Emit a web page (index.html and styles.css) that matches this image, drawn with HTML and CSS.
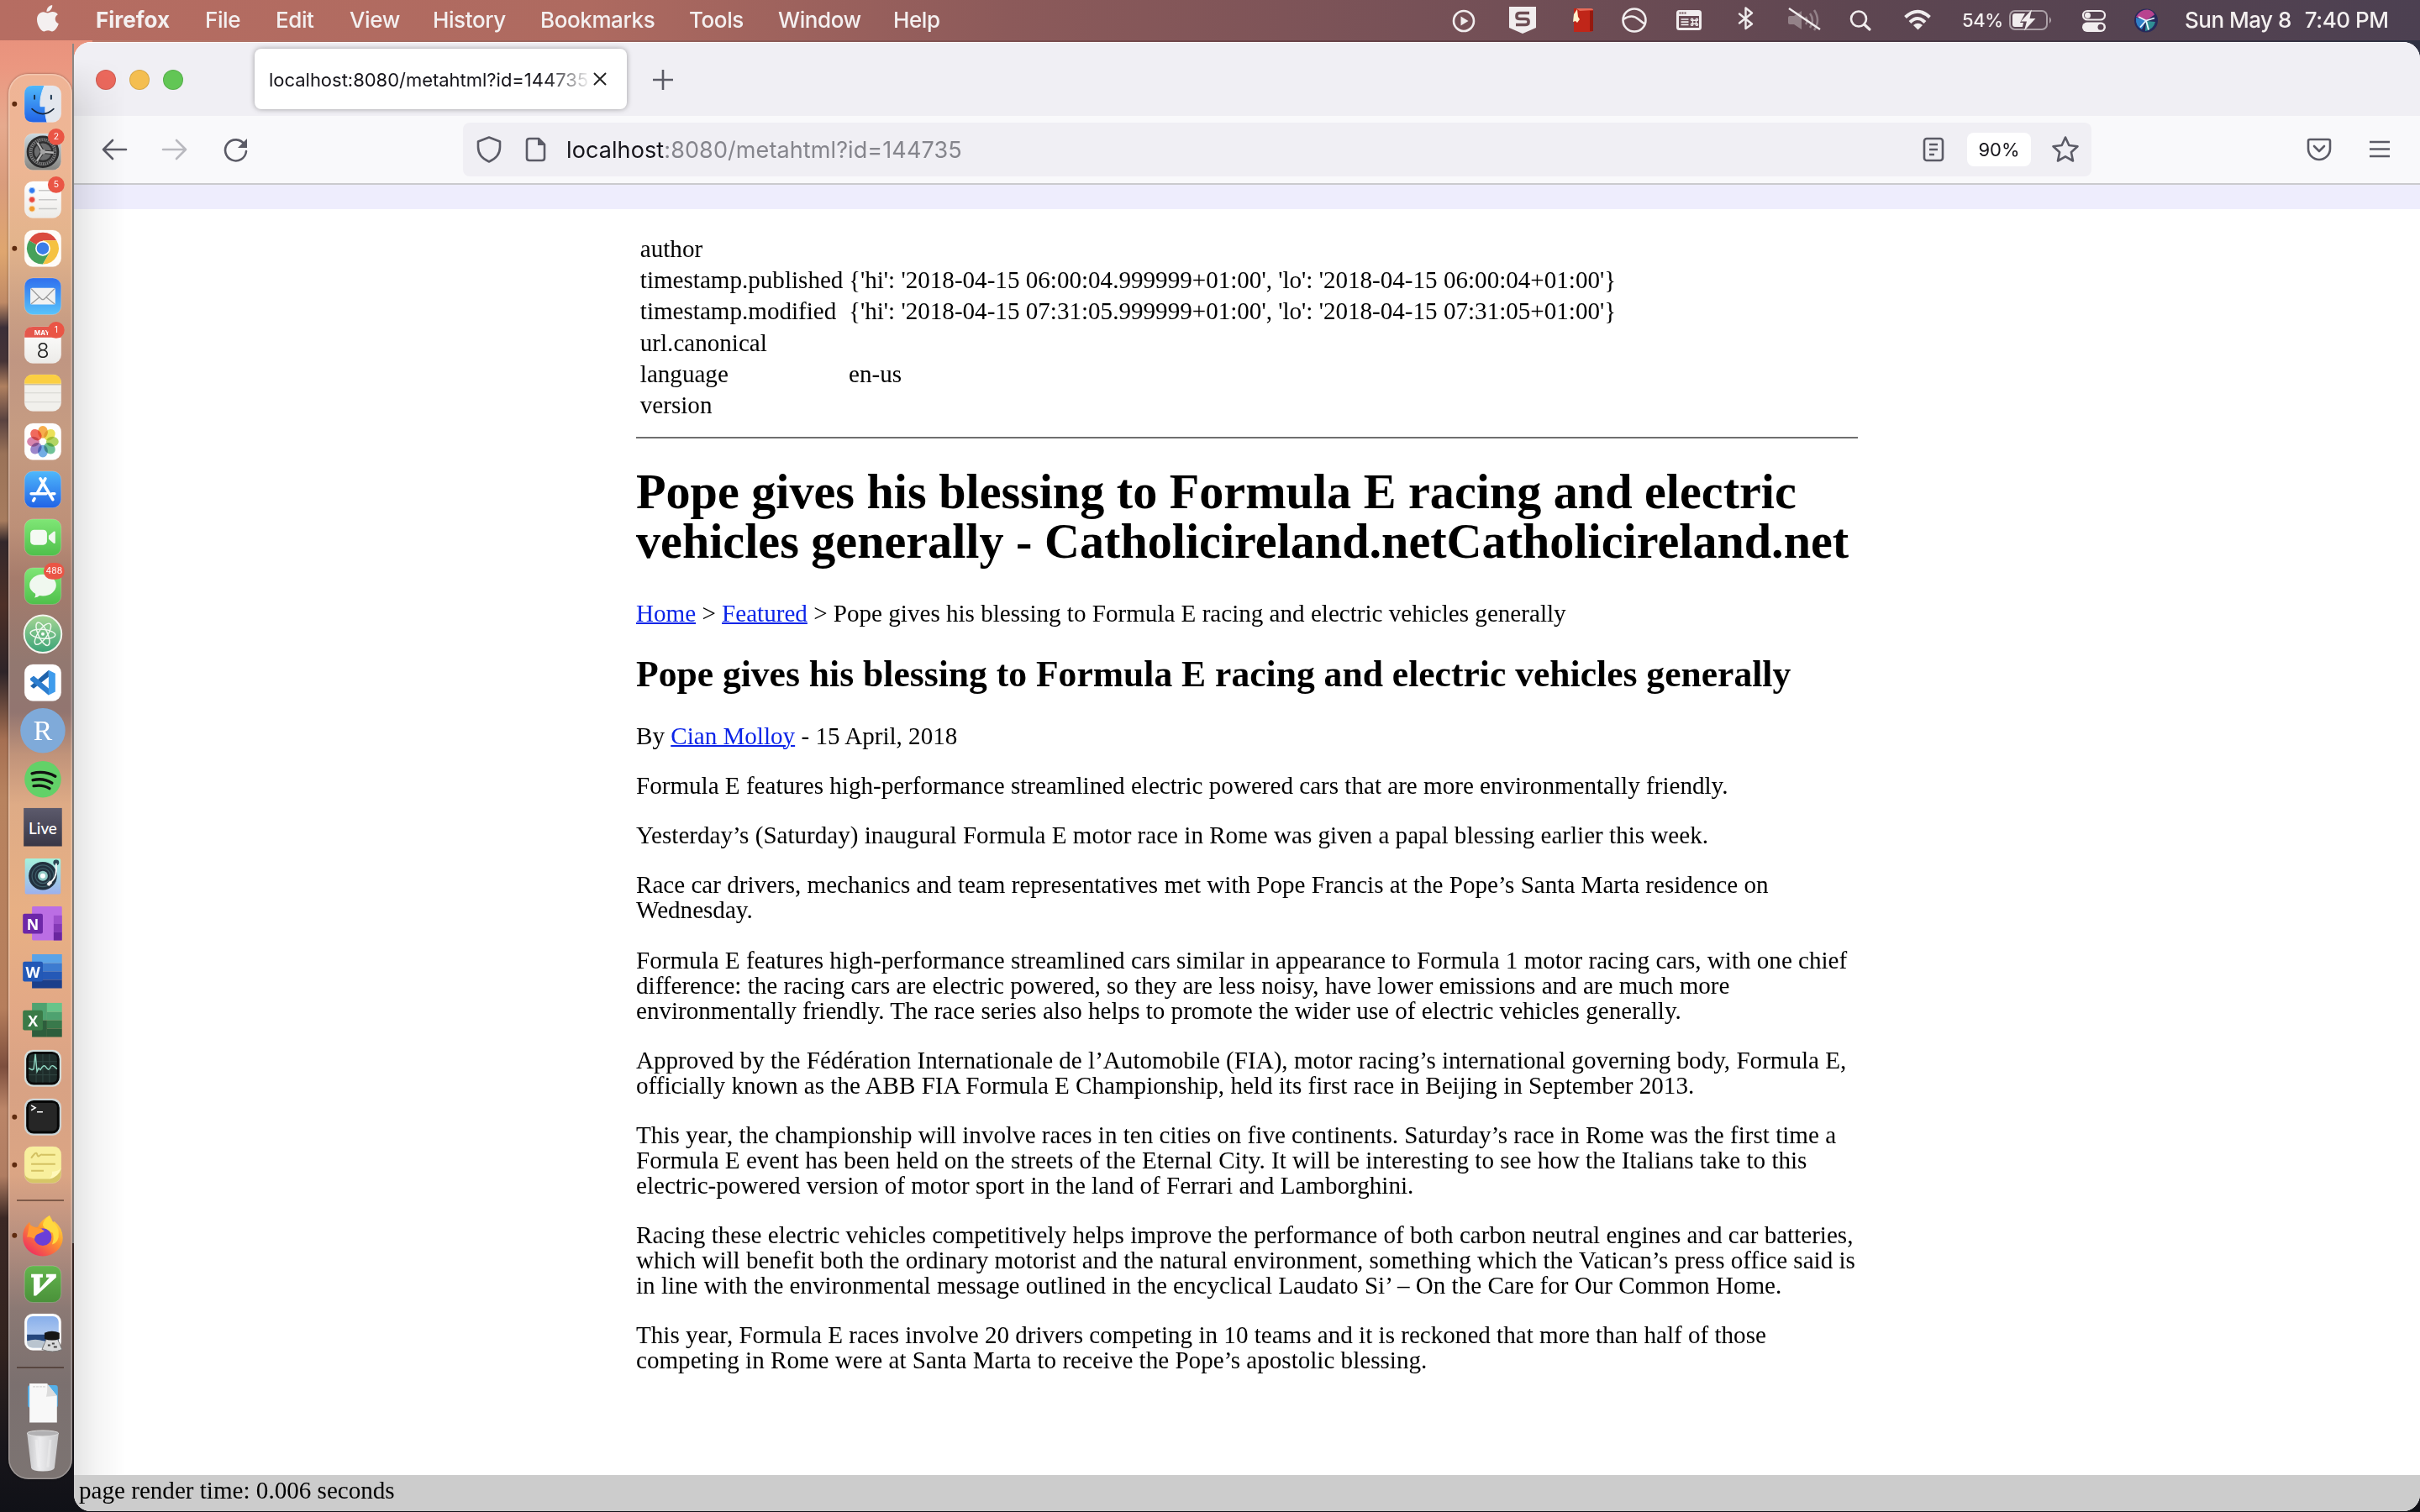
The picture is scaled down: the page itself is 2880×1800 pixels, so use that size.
FILE: index.html
```html
<!DOCTYPE html>
<html lang="en">
<head>
<meta charset="utf-8">
<title>localhost:8080/metahtml?id=144735</title>
<link rel="stylesheet" href="styles.css">
</head>
<body>
<div class="desktop">
  <header class="menubar">
    <svg class="apple" viewBox="0 0 26 32"><path d="M18.2 0c.3 2.300-.7 4.300-2 5.700-1.300 1.500-3 2.300-4.700 2.200C11.200 5.700 12.300 3.700 13.500 2.400 14.800 1 16.700.1 18.200 0zM24.900 11.300c-2 1.200-3.200 3-3.200 5.300 0 2.600 1.600 4.800 4.100 5.700-.6 1.900-1.500 3.600-2.600 5.200-1.600 2.300-3.100 3.900-5.100 3.900-1.900 0-2.600-1.100-4.900-1.100s-3.200 1.100-5 1.100c-2 0-3.700-2-5.100-4.100C1.100 24.300 0 20.500 0 17.300 0 11.700 3.500 8.200 7.500 8.200c2.100 0 3.900 1.300 5.200 1.300 1.200 0 3.300-1.400 5.900-1.400 2.500 0 4.800 1.100 6.300 3.200z"/></svg>
    <nav class="menus">
      <span class="m m-app">Firefox</span><span class="m m-file">File</span><span class="m m-edit">Edit</span><span class="m m-view">View</span><span class="m m-hist">History</span><span class="m m-book">Bookmarks</span><span class="m m-tool">Tools</span><span class="m m-wind">Window</span><span class="m m-help">Help</span>
    </nav>
    <svg class="status" viewBox="1720 0 600 48">
      <g fill="none" stroke="#f1edee" stroke-width="2.600">
        <circle cx="1742" cy="25" r="12"/>
        <circle cx="1945" cy="24" r="13.500"/><path d="M1932 23q10-7 18 0 5 4 8 6"/>
      </g>
      <path d="M1738.500 19.500v11l9-5.500z" fill="#f1edee"/>
      <path d="M1796 8h32v25l-16 7-16-7z" fill="#f1edee"/>
      <path d="M1820 15.500h-11q-4 0-4 3v1.500q0 2.500 4 2.500h6q4 0 4 2.500v1.500q0 3-4 3h-11" fill="none" stroke="#6d4d53" stroke-width="3.600"/>
      <path d="M1873 10l20 0q3 0 3 3v22q0 3-4 3h-19z" fill="#c02619"/><path d="M1876 10h17q3 0 3 2l-16 1z" fill="#e86a58"/><path d="M1892 13h4v24h-4z" fill="#96190f"/><path d="M1872 26l1-9 4-6 1 9 2 3-3 4-2-2z" fill="#fff2cc"/>
      <rect x="1996.500" y="13.500" width="27" height="21" rx="2" fill="none" stroke="#f1edee" stroke-width="3"/><path d="M1996 13h28v6h-28z" fill="#f1edee"/><path d="M2000.500 23h9M2000.500 26.200h9M2000.500 29.400h9" stroke="#f1edee" stroke-width="1.700"/><g fill="none" stroke="#f1edee" stroke-width="1.400"><path d="M2014.500 24.300h4v4h-4z"/><circle cx="2013.600" cy="23.300" r="1.200"/><circle cx="2019.400" cy="23.300" r="1.200"/><circle cx="2013.600" cy="29.200" r="1.200"/><circle cx="2019.400" cy="29.200" r="1.200"/></g><path d="M1998.500 15.500h2m1 0h2m1 0h2" stroke="#6d4d53" stroke-width="1.800"/>
      <path d="M2070 16.500l15 12-7.500 5.500V9.500l7.500 6-15 12" fill="none" stroke="#f1edee" stroke-width="2.400" stroke-linejoin="round" stroke-linecap="round"/>
      <g opacity=".35"><path d="M2128 21q0-2 2-2h5l9-6v22l-9-6h-5q-2 0-2-2z" fill="#f1edee"/><path d="M2149 20q3 5 0 9M2154 16q6 8 0 17M2159 12q8 12 0 24" fill="none" stroke="#f1edee" stroke-width="2.500"/></g>
      <path d="M2129 10l37 25" stroke="#f1edee" stroke-width="2.400"/>
      <circle cx="2212" cy="22.500" r="9" fill="none" stroke="#f1edee" stroke-width="2.600"/><path d="M2218.500 29l6.500 6" stroke="#f1edee" stroke-width="3.200" stroke-linecap="round"/>
      <path d="M2267.500 20.500q14.500-13.500 29 0M2273 26.500q9-9 18 0" fill="none" stroke="#f1edee" stroke-width="4"/><path d="M2277 30q5.500-4.500 11 0l-5.500 5.500z" fill="#f1edee"/>
    </svg>
    <span class="battery">54%</span>
    <svg class="power" viewBox="2388 0 190 48">
      <rect x="2392" y="13" width="44" height="22" rx="6" fill="none" stroke="#f1edee" stroke-width="2" opacity=".55"/><path d="M2398 16h12l-6 11h4l-1 5h-9q-3 0-3-3V19q0-3 3-3z" fill="#f1edee"/><path d="M2418 11.500l-13 14h7l-3 11 13.500-14.500h-7z" fill="#f1edee"/><path d="M2439 20q4 4 0 8z" fill="#f1edee" opacity=".6"/>
      <rect x="2479" y="13" width="26" height="10.500" rx="5.200" fill="none" stroke="#f1edee" stroke-width="2.200"/><circle cx="2484.500" cy="18.200" r="3.500" fill="#f1edee"/><rect x="2478" y="26.500" width="28" height="11.500" rx="5.700" fill="#f1edee"/><circle cx="2500" cy="32.200" r="3.500" fill="#5a4553"/>
      <circle cx="2554" cy="24.500" r="14" fill="#262a5c"/><path d="M2542 20q5-9 14-8.500 6 1 8 6l-10 7z" fill="#b8438f"/><path d="M2542 21l12 3-5 11q-8-4-7-14z" fill="#2f7fc8"/><path d="M2554 25l11 1q-2 9-12 11z" fill="#2f8f94"/><path d="M2545 20l9 4.500 10-3M2554 24.500l-7 8M2554 24.500l3 11" stroke="#eaf8ff" stroke-width="1.800" fill="none"/>
    </svg>
    <time class="clock"><span>Sun May 8</span><span>7:40 PM</span></time>
  </header>

  <section class="window">
    <div class="tabstrip">
      <div class="lights"><i class="light red"></i><i class="light amber"></i><i class="light green"></i></div>
      <div class="tab"><span class="tab-title">localhost:8080/metahtml?id=144735</span><svg class="tab-close" viewBox="0 0 16 16"><path d="M1 1l14 14M15 1L1 15"/></svg></div>
      <svg class="newtab" viewBox="0 0 24 24"><path d="M12 0v24M0 12h24"/></svg>
    </div>
    <div class="toolbar">
      <svg class="navicons" viewBox="0 0 190 40">
        <g fill="none" stroke="#5b5b66" stroke-width="2.600" stroke-linecap="round" stroke-linejoin="round">
          <path d="M15 20h27M26 9L15 20l11 11"/>
          <path d="M86 20h27M102 9l11 11-11 11" opacity=".4"/>
          <path d="M183 14a12.500 12.500 0 1 0 2 8"/>
        </g><path d="M186 7v11h-11z" fill="#5b5b66"/>
      </svg>
      <div class="urlbar">
        <svg class="siteicons" viewBox="0 0 90 40"><g fill="none" stroke="#5b5b66" stroke-width="2.600" stroke-linejoin="round"><path d="M31 5.500l13 5v6.500c0 8-5 14-13 17.500-8-3.500-13-9.500-13-17.500v-6.500z"/><path d="M79 7h11l7 7v16q0 3-3 3H79q-3 0-3-3V10q0-3 3-3z"/></g><path d="M89 6l9 9h-9z" fill="#5b5b66"/></svg>
        <span class="url"><b>localhost</b>:8080/metahtml?id=144735</span>
        <svg class="reader" viewBox="0 0 26 30"><rect x="2" y="2" width="22" height="26" rx="3"/><path d="M8 9h10M8 15h10M8 21h6"/></svg>
        <span class="zoom">90%</span>
        <svg class="star" viewBox="0 0 34 34"><path d="M17 2.500l4.300 9.500 10.200 1.200-7.600 7 2.100 10.300-9-5.200-9 5.200 2.100-10.300-7.600-7L12.700 12z"/></svg>
      </div>
      <svg class="pocket" viewBox="0 0 30 28"><path d="M4 2h22q2 0 2 2v9a13 13 0 0 1-26 0V4q0-2 2-2zM9 10l6 6 6-6"/></svg>
      <svg class="burger" viewBox="0 0 24 22"><path d="M0 2h24M0 10.500h24M0 19h24"/></svg>
    </div>
    <main class="page">
      <div class="band"></div>
      <article class="article">
        <table class="meta">
          <tr><td>author</td><td></td></tr>
          <tr><td>timestamp.published</td><td>{'hi': '2018-04-15 06:00:04.999999+01:00', 'lo': '2018-04-15 06:00:04+01:00'}</td></tr>
          <tr><td>timestamp.modified</td><td>{'hi': '2018-04-15 07:31:05.999999+01:00', 'lo': '2018-04-15 07:31:05+01:00'}</td></tr>
          <tr><td>url.canonical</td><td></td></tr>
          <tr><td>language</td><td>en-us</td></tr>
          <tr><td>version</td><td></td></tr>
        </table>
        <hr>
        <h1>Pope gives his blessing to Formula E racing and electric<br>vehicles generally - Catholicireland.netCatholicireland.net</h1>
        <p class="crumbs"><a>Home</a> &gt; <a>Featured</a> &gt; Pope gives his blessing to Formula E racing and electric vehicles generally</p>
        <h2>Pope gives his blessing to Formula E racing and electric vehicles generally</h2>
        <p>By <a>Cian Molloy</a> - 15 April, 2018</p>
        <p>Formula E features high-performance streamlined electric powered cars that are more environmentally friendly.</p>
        <p>Yesterday’s (Saturday) inaugural Formula E motor race in Rome was given a papal blessing earlier this week.</p>
        <p>Race car drivers, mechanics and team representatives met with Pope Francis at the Pope’s Santa Marta residence on<br>Wednesday.</p>
        <p>Formula E features high-performance streamlined cars similar in appearance to Formula 1 motor racing cars, with one chief<br>difference: the racing cars are electric powered, so they are less noisy, have lower emissions and are much more<br>environmentally friendly. The race series also helps to promote the wider use of electric vehicles generally.</p>
        <p>Approved by the Fédération Internationale de l’Automobile (FIA), motor racing’s international governing body, Formula E,<br>officially known as the ABB FIA Formula E Championship, held its first race in Beijing in September 2013.</p>
        <p>This year, the championship will involve races in ten cities on five continents. Saturday’s race in Rome was the first time a<br>Formula E event has been held on the streets of the Eternal City. It will be interesting to see how the Italians take to this<br>electric-powered version of motor sport in the land of Ferrari and Lamborghini.</p>
        <p>Racing these electric vehicles competitively helps improve the performance of both carbon neutral engines and car batteries,<br>which will benefit both the ordinary motorist and the natural environment, something which the Vatican’s press office said is<br>in line with the environmental message outlined in the encyclical Laudato Si’ – On the Care for Our Common Home.</p>
        <p>This year, Formula E races involve 20 drivers competing in 10 teams and it is reckoned that more than half of those<br>competing in Rome were at Santa Marta to receive the Pope’s apostolic blessing.</p>
      </article>
      <footer class="timing">page render time: 0.006 seconds</footer>
    </main>
  </section>
  <div class="dock-shade"></div>

  <aside class="dock">
    <svg width="0" height="0" class="defs"><defs>
      <linearGradient id="blue" x2="0" y2="1"><stop stop-color="#4fb8fb"/><stop offset="1" stop-color="#2163e6"/></linearGradient>
      <linearGradient id="mail" x2="0" y2="1"><stop stop-color="#2f6fee"/><stop offset="1" stop-color="#58c3fa"/></linearGradient>
      <linearGradient id="green" x2="0" y2="1"><stop stop-color="#7fe676"/><stop offset="1" stop-color="#4fc04b"/></linearGradient>
      <linearGradient id="white" x2="0" y2="1"><stop stop-color="#fff"/><stop offset="1" stop-color="#ecebe8"/></linearGradient>
      <linearGradient id="steel" x2="0" y2="1"><stop stop-color="#ccd9df"/><stop offset="1" stop-color="#84837f"/></linearGradient>
      <linearGradient id="atom" x2="0" y2="1"><stop stop-color="#a6d694"/><stop offset="1" stop-color="#3aa377"/></linearGradient>
      <linearGradient id="live" x2="0" y2="1"><stop stop-color="#5c5a6c"/><stop offset="1" stop-color="#393746"/></linearGradient>
      <linearGradient id="deck" x2="0" y2="1"><stop stop-color="#a4f2dc"/><stop offset="1" stop-color="#9cb0ee"/></linearGradient>
      <linearGradient id="fox" x1="1" x2=".2" y2="1"><stop stop-color="#fff04a"/><stop offset=".45" stop-color="#ff9a2c"/><stop offset="1" stop-color="#ee2a62"/></linearGradient>
      <linearGradient id="vim" x2="0" y2="1"><stop stop-color="#64b54e"/><stop offset="1" stop-color="#4a913a"/></linearGradient>
      <linearGradient id="sky" x2="0" y2="1"><stop stop-color="#87aeea"/><stop offset="1" stop-color="#c9dbf5"/></linearGradient>
      <linearGradient id="bin" x2="1"><stop stop-color="#c4c4c6"/><stop offset=".4" stop-color="#ececee"/><stop offset="1" stop-color="#c8c8ca"/></linearGradient>
    </defs></svg>

    <svg class="slot" viewBox="-41 -29 75 58"><circle class="dot" cx="-34" cy="0" r="3"/><rect class="tile" fill="#e3e7ee"/><path d="M2-22h-14q-10 0-10 10v24q0 10 10 10H5Q2 12 3 3h-6Q-4-9 2-22z" fill="url(#blue)"/><path d="M2-22Q-4-9-3 3h6Q2 12 5 22" fill="none" stroke="#dfe9f5" stroke-width="1"/><path d="M-10-10v4M10-10v4" stroke="#17324d" stroke-width="2" stroke-linecap="round"/><path d="M-13 6q13 12 26 0" fill="none" stroke="#17263a" stroke-width="1.700" stroke-linecap="round"/></svg>
    <svg class="slot" viewBox="-41 -29 75 58"><rect class="tile" fill="url(#steel)"/><circle r="18" fill="#8a8b8c" stroke="#2b2b2c" stroke-width="3"/><circle r="14.500" fill="none" stroke="#3a3a3b" stroke-width="3" stroke-dasharray="1.500 1"/><circle r="11.500" fill="#6c6d6e" stroke="#2e2e2f" stroke-width="2.500"/><path d="M0 0l12 1M0 0l-6-10.500M0 0l-7 10" stroke="#2e2e2f" stroke-width="4.500"/><path d="M0 0l13 1M0 0l-6.500-11M0 0l-7 11" stroke="#b7b7b7" stroke-width="2.400"/><circle r="3" fill="#a5a5a5"/><circle class="badge" cx="16" cy="-18" r="10"/><text class="num" x="16" y="-14.500">2</text></svg>
    <svg class="slot" viewBox="-41 -29 75 58"><rect class="tile" fill="url(#white)"/><path d="M-5-11H17M-5 0H17M-5 11H17" stroke="#c8c8c8" stroke-width="1.500"/><circle cx="-13" cy="-11" r="3.500" fill="#2f7af0" stroke="#a6c6f8"/><circle cx="-13" r="3.500" fill="#e8483c" stroke="#f5b1ab"/><circle cx="-13" cy="11" r="3.500" fill="#f09a2f" stroke="#f8d3a4"/><circle class="badge" cx="16" cy="-18" r="10"/><text class="num" x="16" y="-14.500">5</text></svg>
    <svg class="slot" viewBox="-41 -29 75 58"><circle class="dot" cx="-34" cy="0" r="3"/><rect class="tile" fill="#fefcf8"/><path d="M0 0L-16.500-9.500A19 19 0 0 1 16.500-9.500H0z" fill="#da4b3e"/><path d="M0 0l-16.500-9.500A19 19 0 0 0 0 19l8-14z" fill="#46a15a"/><path d="M0-9.500h16.500A19 19 0 0 1 0 19L8 5z" fill="#f5c242"/><circle r="9" fill="#fff"/><circle r="7.300" fill="#3c7de8"/></svg>
    <svg class="slot" viewBox="-41 -29 75 58"><rect class="tile" fill="url(#mail)"/><rect x="-15" y="-10" width="30" height="20" rx="2" fill="#f1f1f1"/><path d="M-14-9L-2 3q2 2 4 0L14-9M-14 9l10-8M14 9L4 1" fill="none" stroke="#9c9c9c" stroke-width="1.300"/></svg>
    <svg class="slot" viewBox="-41 -29 75 58"><rect class="tile" fill="url(#white)"/><path d="M-22-9v-3q0-10 10-10h24q10 0 10 10v3z" fill="#e5574c"/><text class="month" x="-1" y="-11.500">MAY</text><text class="day" x="0" y="15">8</text><circle class="badge" cx="16" cy="-18" r="10"/><text class="num" x="16" y="-14.500">1</text></svg>
    <svg class="slot" viewBox="-41 -29 75 58"><rect class="tile" fill="#f1f0ec"/><path d="M-22-11v-1q0-10 10-10h24q10 0 10 10v1z" fill="#fbcf42"/><path d="M-22-10H22" stroke="#b9a978" stroke-width="1"/><path d="M-22 0H22M-22 11H22" stroke="#d5d4d0" stroke-width="1"/></svg>
    <svg class="slot" viewBox="-41 -29 75 58"><rect class="tile" fill="#fefefe"/><g opacity=".85"><ellipse class="petal" fill="#f6a02d"/><ellipse class="petal" fill="#e8dc3c" transform="rotate(45)"/><ellipse class="petal" fill="#a5cf48" transform="rotate(90)"/><ellipse class="petal" fill="#57b886" transform="rotate(135)"/><ellipse class="petal" fill="#5b9fe0" transform="rotate(180)"/><ellipse class="petal" fill="#8a72c2" transform="rotate(225)"/><ellipse class="petal" fill="#d2719f" transform="rotate(270)"/><ellipse class="petal" fill="#ee5142" transform="rotate(315)"/></g></svg>
    <svg class="slot" viewBox="-41 -29 75 58"><rect class="tile" fill="url(#blue)"/><path d="M3-13L-7 5M-3-13L12 12M-10 11l-1.500 2.500M-14 5H4M11 5h3" fill="none" stroke="#fff" stroke-width="3.600" stroke-linecap="round"/></svg>
    <svg class="slot" viewBox="-41 -29 75 58"><rect class="tile" fill="url(#green)"/><rect x="-15" y="-9" width="20" height="18" rx="4.500" fill="#f4faf3"/><path d="M7-2l6-5q2-1 2 1V6q0 2-2 1L7 2z" fill="#f0f7ef"/></svg>
    <svg class="slot" viewBox="-41 -29 75 58"><rect class="tile" fill="url(#green)"/><path d="M0-14c9 0 16 6 16 13S9 12 0 12q-2 0-4-.5Q-6 14-10 14q2-2 1-5-7-4-7-10c0-7 7-13 16-13z" fill="#f0f8ef"/><rect class="badge" x="1" y="-28" width="25" height="20" rx="10"/><text class="num" x="13.500" y="-14.500">488</text></svg>
    <svg class="slot" viewBox="-41 -29 75 58"><circle r="22.500" fill="url(#atom)" stroke="#f4f4ee" stroke-width="2"/><g fill="none" stroke="#eff8ef" stroke-width="1.500"><ellipse rx="15" ry="5.500" transform="rotate(5)"/><ellipse rx="15" ry="5.500" transform="rotate(65)"/><ellipse rx="15" ry="5.500" transform="rotate(125)"/></g><circle r="2" fill="#fff"/></svg>
    <svg class="slot" viewBox="-41 -29 75 58"><rect class="tile" fill="#fff"/><path d="M7-15v8L-11 7l-4-3z" fill="#1f63ab"/><path d="M7 15V7L-11-8l-4 3z" fill="#2d7ecf"/><path d="M-11-8l-4 3v2L7 15V7z" fill="#2d7ecf"/><path d="M7-15l8 4v22l-8 4z" fill="#3f9cec"/></svg>
    <svg class="slot" viewBox="-41 -29 75 58"><circle r="27" fill="#7faad9"/><text class="rstudio" x="0" y="11.500">R</text></svg>
    <svg class="slot" viewBox="-41 -29 75 58"><circle r="22" fill="#63d168"/><path d="M-13-7q15-4 28 3.500M-12 1q13-3 23 3.500M-11 8q11-2 19 3" fill="none" stroke="#111" stroke-width="3.400" stroke-linecap="round"/></svg>
    <svg class="slot" viewBox="-41 -29 75 58"><rect x="-23" y="-23" width="46" height="46" fill="url(#live)"/><text class="ableton" x="0" y="8">Live</text></svg>
    <svg class="slot" viewBox="-41 -29 75 58"><rect x="-21.500" y="-21" width="43" height="43" rx="2" fill="url(#deck)"/><circle r="17" fill="#22313f"/><circle r="13" fill="none" stroke="#40606a" stroke-width="1.200"/><circle r="9" fill="none" stroke="#40606a" stroke-width="1.200"/><circle r="6" fill="#8fc9c4"/><circle r="3" fill="#fff"/><circle cx="16" cy="-16" r="3.500" fill="#2c4654"/><path d="M16-15q1 16-4 20l-6 6" stroke="#f4f4f4" stroke-width="2" fill="none"/><path d="M10 7l-4 4" stroke="#f4f4f4" stroke-width="4"/></svg>
    <svg class="slot" viewBox="-41 -29 75 58"><rect x="-13" y="-21" width="36" height="41" rx="1.500" fill="#bb6ee4"/><path d="M13-10h10V0H13z" fill="#9e50cc"/><path d="M13 0h10v10H13z" fill="#8439b6"/><path d="M13 10h10v10H13z" fill="#6a259f"/><rect x="-24" y="-12" width="24" height="24" rx="2" fill="#6d27a8"/><text class="office" x="-12" y="7">N</text></svg>
    <svg class="slot" viewBox="-41 -29 75 58"><path d="M-13-21h36v11h-36z" fill="#5aa3e8"/><path d="M-13-10h36V0h-36z" fill="#3d7bd0"/><path d="M-13 0h36v10h-36z" fill="#2559b7"/><path d="M-13 10h36v10h-36z" fill="#1b3f8b"/><rect x="-24" y="-12" width="24" height="24" rx="2" fill="#2358b6"/><text class="office" x="-12" y="7">W</text></svg>
    <svg class="slot" viewBox="-41 -29 75 58"><path d="M-13-21H5V0h-18z" fill="#4ea270"/><path d="M5-21h18v11H5z" fill="#67c48a"/><path d="M5-10h18V0H5z" fill="#4ea270"/><path d="M-13 0H5v20h-18z" fill="#2d5e3c"/><path d="M5 0h18v10H5z" fill="#39794b"/><path d="M5 10h18v10H5z" fill="#2d5e3c"/><rect x="-24" y="-12" width="24" height="24" rx="2" fill="#3a7a47"/><text class="office" x="-12" y="7">X</text></svg>
    <svg class="slot" viewBox="-41 -29 75 58"><rect class="tile" fill="#d0dedd"/><rect x="-20" y="-20" width="40" height="40" rx="9" fill="#0a0a0a"/><rect x="-17" y="-17" width="34" height="34" rx="5" fill="#1e2c2a"/><path d="M-17-8h34M-17 0h34M-17 8h34M-8-17v34M0-17v34M8-17v34" stroke="#314743" stroke-width="1"/><path d="M-17 0l4 2 2-1 2-18 2 21 2-4 2 2Q1-6 4-1t5 0 8 2" fill="none" stroke="#8fd6c2" stroke-width="1.400"/></svg>
    <svg class="slot" viewBox="-41 -29 75 58"><circle class="dot" cx="-34" cy="0" r="3"/><rect class="tile" fill="#c8d3d6"/><rect x="-20" y="-20" width="40" height="40" rx="9" fill="#050505"/><rect x="-17" y="-17" width="34" height="34" rx="5" fill="#262626"/><path d="M-14-14l5 3-5 3M-7-6h7" fill="none" stroke="#fff" stroke-width="1.600"/></svg>
    <svg class="slot" viewBox="-41 -29 75 58"><circle class="dot" cx="-34" cy="0" r="3"/><rect class="tile" fill="#d6c666"/><path d="M-22-12q0-10 10-10h24q10 0 10 10V5q-3 9-14 12h-20q-10 0-10-9z" fill="#f8ef9d"/><path d="M22 4q-3 10-14 13 4-5 3-9 7 0 11-4z" fill="#fff8ba"/><path d="M-14-8q6-9 7-5t3 2 4-1h15M-14-1h29M-14 7H1" fill="none" stroke="#d3c162" stroke-width="2"/></svg>
    <i class="rule"></i>
    <svg class="slot" viewBox="-41 -29 75 58"><circle class="dot" cx="-34" cy="0" r="3"/><path d="M8-24q3 4 4 8l2-1q10 8 10 20A24 22 0 0 1-24 3q-1-11 8-19l2 6h8Q-3-18 8-24z" fill="url(#fox)"/><path d="M8-24q-8 6-8 12 3 6 12 9 2 7-1 14 9-3 8-14 0-8-7-13-3-3-4-8z" fill="#ffd93f"/><circle cx="0" cy="2" r="10.500" fill="#6a3fd8"/><path d="M-16-13q8 5 14 5l4 3-7 3q-4 1-5 6-6-3-9-2z" fill="#ff9a34"/></svg>
    <svg class="slot" viewBox="-41 -29 75 58"><rect class="tile" fill="url(#vim)"/><path d="M-14-12H0v4h-3.500V5L8-8H4v-4h12v4L-8 14h-3V-8h-3z" fill="#fff"/></svg>
    <svg class="slot" viewBox="-41 -29 75 58"><rect class="tile" fill="#fbfbfb"/><rect x="-19" y="-19" width="38" height="38" rx="7" fill="url(#sky)"/><path d="M-19 3h38v8h-38z" fill="#26477c"/><path d="M-19 11q10-4 20 0v8h-13q-7 0-7-7z" fill="#b9c4cf"/><path d="M4 9h14l5 12q-11 5-24 0z" fill="#d9dadb" stroke="#777" stroke-width="1"/><path d="M2 1q9-4 18 0v7q-9 4-18 0z" fill="#161616"/><path d="M6 16h3m2-2h3m-1 4h4" stroke="#444" stroke-width="2"/></svg>
    <i class="rule"></i>
    <svg class="slot" viewBox="-41 -29 75 58"><rect x="-18" y="-21" width="36" height="27" rx="3" fill="#54afe8"/><path d="M-16-23H5l12 15v32h-33z" fill="#f8f8f8"/><path d="M5-23q1 9-1 16l13-1z" fill="#dcdcdc"/><path d="M-12-19H3" stroke="#ccc" stroke-dasharray="3 1"/></svg>
    <svg class="slot" viewBox="-41 -29 75 58"><path d="M-19-21l5 42q1 4 14 4t14-4l5-42z" fill="url(#bin)"/><ellipse cy="-20.500" rx="19" ry="3.500" fill="#b1b0b2" stroke="#dedede" stroke-width="1"/><path d="M-8-13l3 33M9-13L6 20" stroke="#f6f6f6" stroke-width="3" opacity=".4"/></svg>
  </aside>
</div>
</body>
</html>
```
FILE: styles.css
```css
* { box-sizing: border-box; }
body { margin: 0; overflow: hidden; }

.desktop {
  position: relative;
  width: 2880px;
  height: 1800px;
  background:
    linear-gradient(#8b8684, #8b8684) 86px 52px / 2px 1428px no-repeat,
    linear-gradient(90deg, #b97a6c 0, #6b4448 50%, #2e3041 100%) 110px 48px / 2770px 60px no-repeat,
    linear-gradient(180deg, #e58b79 0, #eb9780 80px, #e6aa8e 150px, #d99c7c 220px, #dfa66f 300px, #c08a66 360px, #3b2f38 390px, #463437 430px, #b08060 460px, #5a4340 500px, #9a7258 540px, #a77c5e 620px, #33282b 645px, #4e3028 720px, #2e2428 800px, #a56f52 880px, #b8835f 950px, #b67e5c 1200px, #7d4f3e 1270px, #bb8568 1320px, #b07d62 1400px, #3b2825 1450px, #33231f 1600px, #18161b 1720px, #101117 1800px);
}

/* Menu bar */
.menubar {
  display: flex;
  align-items: center;
  height: 48px;
  padding-left: 44px;
  background: linear-gradient(90deg, #b66d62 0, #ae6a60 700px, #8c5a5a 1200px, #775157 1690px, #5e4651 2200px, #4c4051 2880px);
  color: #f4f0f0;
  font: 500 26px/48px Inter, sans-serif;
  white-space: nowrap;
}
.apple { width: 26px; height: 32px; margin-top: -4px; fill: #f4f0f0; flex: none; }
.menus { display: flex; width: 1650px; padding-left: 44px; }
.m { flex: none; font-weight: 500; letter-spacing: -.4px; }
.m-app { width: 130px; font-weight: 700; letter-spacing: 0; }
.m-file { width: 84px; }
.m-edit { width: 88px; }
.m-view { width: 99px; }
.m-hist { width: 128px; }
.m-book { width: 177px; }
.m-tool { width: 106px; }
.m-wind { width: 137px; }
.status { width: 600px; height: 48px; flex: none; }
.battery { width: 53px; margin-left: 15px; flex: none; font-size: 22px; letter-spacing: -.4px; }
.power { width: 190px; height: 48px; flex: none; }
.clock { display: flex; gap: 16px; margin-left: 22px; letter-spacing: -.5px; }

/* Browser window */
.window {
  display: flex;
  flex-direction: column;
  width: 2792px;
  height: 1749px;
  margin: 2px 0 0 88px;
  border-radius: 20px;
  overflow: hidden;
  background: #fff;
}
.tabstrip { display: flex; align-items: center; height: 88px; flex: none; padding-left: 26px; background: #f0eff4; border-top: 1px solid #fff; }
.lights { display: flex; gap: 16px; width: 189px; }
.light { width: 24px; height: 24px; border-radius: 50%; border: 1px solid rgba(0,0,0,.12); }
.red { background: #ec695d; }
.amber { background: #f4be50; }
.green { background: #62c655; }
.tab { display: flex; align-items: center; width: 443px; height: 72px; margin-top: -1px; padding: 2px 0 0 17px; background: #fff; border-radius: 8px; box-shadow: 0 0 6px rgba(0,0,0,.35); }
.tab-title { width: 382px; overflow: hidden; white-space: nowrap; font: 22px/40px Inter, sans-serif; letter-spacing: -.02px; color: #15141a; -webkit-mask-image: linear-gradient(90deg, #000 330px, transparent 384px); mask-image: linear-gradient(90deg, #000 330px, transparent 384px); }
.tab-close { width: 16px; height: 16px; margin-left: 4px; margin-top: -2px; fill: none; stroke: #222; stroke-width: 2; }
.newtab { width: 24px; height: 24px; margin-left: 31px; fill: none; stroke: #5b5b66; stroke-width: 2.600; }

.toolbar { display: flex; align-items: center; height: 82px; flex: none; padding: 0 36px 0 20px; background: #f9f9fb; border-bottom: 2px solid #cbcbce; }
.navicons { width: 190px; height: 40px; flex: none; }
.urlbar { display: flex; align-items: center; width: 1938px; height: 64px; margin-left: 253px; background: #f0eff4; border-radius: 8px; flex: none; }
.siteicons { width: 90px; height: 40px; overflow: visible; flex: none; }
.url { flex: 1; padding: 2px 0 0 33px; font: 27px/40px Inter, sans-serif; letter-spacing: .1px; color: #85858c; white-space: nowrap; }
.url b { font-weight: 400; color: #15141a; }
.reader { width: 26px; height: 30px; margin-right: 27px; fill: none; stroke: #5b5b66; stroke-width: 2.600; }
.zoom { width: 76px; height: 40px; margin-right: 24px; border-radius: 8px; background: #fff; text-align: center; font: 22px/41px Inter, sans-serif; color: #15141a; }
.star { width: 34px; height: 34px; margin-right: 14px; fill: none; stroke: #5b5b66; stroke-width: 2.600; stroke-linejoin: round; }
.pocket { width: 30px; height: 28px; margin-left: auto; margin-right: 45px; fill: none; stroke: #5b5b66; stroke-width: 2.600; stroke-linecap: round; stroke-linejoin: round; }
.burger { width: 24px; height: 22px; stroke: #5b5b66; stroke-width: 2.600; }

/* Web page */
.page { display: flex; flex-direction: column; flex: 1; font: 29.1px/30px "Liberation Serif", serif; color: #000; }
.band { height: 29px; background: #eeedfd; flex: none; }
.article { width: 1454px; margin: 0 0 0 669px; padding-top: 26.6px; flex: 1; white-space: nowrap; }
.meta { border-spacing: 3.6px; height: 226.8px; }
.meta td { height: 33.6px; padding: 1.8px; }
.article hr { height: 2px; margin: 17.6px 0 34.1px; border: 0; background: #6f6f6f; }
.article h1 { margin: 0 0 41.2px; font-size: 58.15px; line-height: 59px; }
.article h2 { margin: 0 0 34.2px; font-size: 43.6px; line-height: 50px; }
.article p { margin: 0 0 29.15px; }
.article .crumbs { margin-bottom: 31.6px; }
.article a { color: #0b24e8; text-decoration: underline; text-decoration-thickness: 2px; }
.timing { height: 43px; flex: none; padding: 3px 6px 0; background: #ccc; }

/* Soft shadow that the dock casts on the window */
.dock-shade { position: absolute; left: 88px; top: 70px; width: 62px; height: 1686px; background: linear-gradient(90deg, rgba(0,0,0,.1), rgba(0,0,0,.04) 45%, rgba(0,0,0,0)); -webkit-mask-image: linear-gradient(transparent, #000 60px); mask-image: linear-gradient(transparent, #000 60px); }

/* Dock */
.dock {
  position: absolute;
  left: 10px;
  top: 88px;
  width: 76px;
  height: 1673px;
  padding-top: 6.500px;
  border-radius: 24px;
  display: flex;
  flex-direction: column;
  box-shadow: inset 0 0 0 1.500px rgba(255,255,255,.25), 0 0 3px rgba(0,0,0,.4);
  background: linear-gradient(180deg, #efb496 0, #edb694 110px, #e3b48c 200px, #c99e84 290px, #c09682 340px, #c69c82 430px, #bd9078 540px, #a67c6c 600px, #927870 700px, #927570 760px, #c0937a 810px, #deab86 870px, #e8b084 1000px, #e2a886 1120px, #d8a284 1200px, #dba584 1310px, #c99982 1350px, #b08c7e 1400px, #8b7974 1470px, #7b706f 1560px, #7c7472 1673px);
}
.defs { position: absolute; }
.slot { width: 75px; height: 57.45px; flex: none; overflow: visible; }
.rule { width: 56px; height: 2px; margin: 12.500px 0 12px 10px; background: rgba(50,25,15,.5); flex: none; }
.dot { fill: #5f2b0f; }
.tile { x: -22px; y: -22px; width: 44px; height: 44px; rx: 10px; stroke: rgba(255,255,255,.25); stroke-width: .8; }
.badge { fill: #ea5545; }
.num { fill: #fff; font: 10.500px Inter, sans-serif; text-anchor: middle; }
.month { fill: #fff; font: 700 8px Inter, sans-serif; text-anchor: middle; }
.day { fill: #222; font: 300 25px Inter, sans-serif; text-anchor: middle; }
.petal { cx: 0; cy: -11.500px; rx: 6px; ry: 7.500px; mix-blend-mode: multiply; }
.rstudio { fill: #fff; font: 34px "Liberation Serif", serif; text-anchor: middle; }
.ableton { fill: #fff; font: 500 19px Lato, sans-serif; text-anchor: middle; }
.office { fill: #fff; font: 700 18px "Open Sans", sans-serif; text-anchor: middle; }
```
